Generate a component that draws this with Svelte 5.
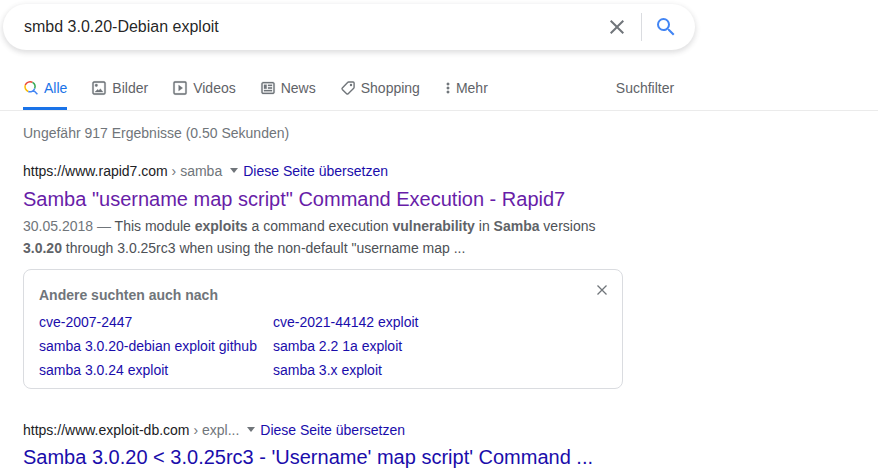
<script>
  const tabs = [
    { id: 'all', label: 'Alle', active: true },
    {
      id: 'images',
      label: 'Bilder',
      path: 'M14 13l4 5H6l4-4 1.79 1.78L14 13zm-6.01-2.99A2 2 0 0 0 8 6a2 2 0 0 0-.01 4.01zM22 5v14a3 3 0 0 1-3 2.99H5c-1.64 0-3-1.36-3-3V5c0-1.64 1.36-3 3-3h14c1.65 0 3 1.36 3 3zm-2.01 0a1 1 0 0 0-1-1H5a1 1 0 0 0-1 1v14a1 1 0 0 0 1 1h7v-.01h7a1 1 0 0 0 1-1V5'
    },
    {
      id: 'videos',
      label: 'Videos',
      path: 'M10 16.5l6-4.5-6-4.5v9zM5 20h14a1 1 0 0 0 1-1V5a1 1 0 0 0-1-1H5a1 1 0 0 0-1 1v14a1 1 0 0 0 1 1zm14.5 2H5a3 3 0 0 1-3-3V4.4A2.4 2.4 0 0 1 4.4 2h15.2A2.4 2.4 0 0 1 22 4.4v15.1a2.5 2.5 0 0 1-2.5 2.5'
    },
    {
      id: 'news',
      label: 'News',
      path: 'M12 11h6v2h-6v-2zm-6 6h12v-2H6v2zm0-4h4V7H6v6zm16-7.22v12.44c0 1.54-1.34 2.78-3 2.78H5c-1.64 0-3-1.25-3-2.78V5.78C2 4.26 3.36 3 5 3h14c1.64 0 3 1.25 3 2.78zM19.99 12V5.78c0-.42-.46-.78-1-.78H5c-.54 0-1 .36-1 .78v12.44c0 .42.46.78 1 .78h14c.54 0 1-.36 1-.78V12zM12 9h6V7h-6v2'
    },
    { id: 'shopping', label: 'Shopping' },
    {
      id: 'more',
      label: 'Mehr',
      path: 'M12 8c1.1 0 2-.9 2-2s-.9-2-2-2-2 .9-2 2 .9 2 2 2zm0 2c-1.100 0-2 .9-2 2s.9 2 2 2 2-.9 2-2-.9-2-2-2zm0 6c-1.100 0-2 .9-2 2s.9 2 2 2 2-.9 2-2-.9-2-2-2z'
    }
  ];
  const related = [
    'cve-2007-2447',
    'cve-2021-44142 exploit',
    'samba 3.0.20-debian exploit github',
    'samba 2.2 1a exploit',
    'samba 3.0.24 exploit',
    'samba 3.x exploit'
  ];
  const closePath =
    'M19 6.41L17.59 5 12 10.59 6.41 5 5 6.41 10.59 12 5 17.59 6.41 19 12 13.41 17.59 19 19 17.59 13.41 12z';
</script>

{#snippet source(domain, crumb)}
  <div class="source">
    <span class="domain">{domain}</span><span class="crumb">&nbsp;› {crumb}</span>
    <i class="caret"></i>
    <a href="#translate">Diese Seite übersetzen</a>
  </div>
{/snippet}

<div class="page">
  <header class="search">
    <span class="query">smbd 3.0.20-Debian exploit</span>
    <svg class="clear" width="24" height="24" viewBox="0 0 24 24"><path d={closePath} /></svg>
    <span class="divider"></span>
    <svg class="go" width="24" height="24" viewBox="0 0 24 24">
      <path d="M15.5 14h-.79l-.28-.27A6.471 6.471 0 0 0 16 9.5 6.5 6.5 0 1 0 9.5 16c1.61 0 3.09-.59 4.23-1.57l.27.28v.79l5 4.99L20.49 19l-4.99-5zm-6 0C7.01 14 5 11.99 5 9.5S7.01 5 9.5 5 14 7.01 14 9.5 11.99 14 9.5 14z" />
    </svg>
  </header>

  <nav class="tabs">
    {#each tabs as tab (tab.id)}
      <a class="tab {tab.id}" class:active={tab.active} href="#{tab.id}">
        {#if tab.id === 'all'}
          <svg class="lens" width="16" height="16" viewBox="0 0 16 16">
            <path d="M2.300 5.100A5 5 0 0 1 9.500 2.470" stroke="#ea4335" />
            <path d="M9.500 2.470A5 5 0 0 1 11.700 8.510" stroke="#34a853" />
            <path d="M5.290 11.500A5 5 0 0 1 2.300 5.100" stroke="#fbbc04" />
            <path d="M11.700 8.510A5 5 0 0 1 5.290 11.500M10.500 10.300L14.400 14.200" stroke="#4285f4" />
          </svg>
        {:else if tab.id === 'shopping'}
          <svg width="16" height="16" viewBox="0 0 16 16">
            <path d="M8.600 2H13.100Q14.100 2 14.100 3V7.300Q14.100 7.900 13.700 8.300L8.200 13.700Q7.400 14.400 6.600 13.700L2.300 9.400Q1.600 8.600 2.300 7.900L7.600 2.500Q8 2 8.600 2Z" fill="none" stroke="#70757a" stroke-width="1.4" />
            <circle cx="11" cy="5" r="1.200" />
          </svg>
        {:else}
          <svg class="glyph" width="16" height="16" viewBox="0 0 24 24"><path d={tab.path} /></svg>
        {/if}
        <span>{tab.label}</span>
      </a>
    {/each}
    <span class="filter">Suchfilter</span>
  </nav>

  <main>
    <div class="stats">Ungefähr 917 Ergebnisse (0.50 Sekunden)</div>

    <article>
      {@render source('https://www.rapid7.com', 'samba')}
      <h3 class="visited">Samba "username map script" Command Execution - Rapid7</h3>
      <p>
        <span class="date">30.05.2018 —</span> This module <b>exploits</b> a command execution
        <b>vulnerability</b> in <b>Samba</b> versions <b>3.0.20</b> through 3.0.25rc3 when using the
        non-default "username map ...
      </p>
    </article>

    <section class="related">
      <div class="heading">
        <h4>Andere suchten auch nach</h4>
        <svg width="16" height="16" viewBox="0 0 16 16">
          <path d="M3.500 3.500L12.500 12.500M12.500 3.500L3.500 12.500" fill="none" stroke="#70757a" stroke-width="1.300" />
        </svg>
      </div>
      <div class="links">
        {#each related as term}
          <a href="#related">{term}</a>
        {/each}
      </div>
    </section>

    <article>
      {@render source('https://www.exploit-db.com', 'expl...')}
      <h3>Samba 3.0.20 &lt; 3.0.25rc3 - 'Username' map script' Command ...</h3>
    </article>
  </main>
</div>

<style>
  :global(body) {
    background: #fff;
  }
  .page {
    box-sizing: border-box;
    height: 471px;
    padding-top: 4px;
    overflow: hidden;
    font-family: 'Liberation Sans', Arial, sans-serif;
    font-size: 14px;
    color: #4d5156;
  }
  a {
    color: #1a0dab;
    text-decoration: none;
  }
  svg {
    flex: none;
    fill: #70757a;
  }
  .search {
    box-sizing: border-box;
    display: flex;
    align-items: center;
    width: 692px;
    height: 46px;
    margin-left: 3px;
    padding: 0 17px 0 21px;
    border-radius: 24px;
    box-shadow: 0 2px 5px 1px rgba(64, 60, 67, 0.16);
  }
  .query {
    flex: 1;
    font-size: 16px;
    color: rgba(0, 0, 0, 0.87);
  }
  .divider {
    width: 1px;
    height: 28px;
    margin: 0 12px;
    background: #dadce0;
  }
  .go {
    fill: #4285f4;
  }
  .tabs {
    display: flex;
    gap: 24px;
    height: 60px;
    padding-left: 23px;
    border-bottom: 1px solid #ebebeb;
  }
  .tab {
    box-sizing: border-box;
    display: flex;
    align-items: center;
    gap: 5px;
    padding-top: 16px;
    border-bottom: 0 solid #1a73e8;
    color: #5f6368;
  }
  .active {
    padding-top: 19px;
    border-bottom-width: 3px;
    color: #1a73e8;
  }
  .lens {
    fill: none;
    stroke-width: 1.5;
  }
  .glyph {
    stroke: #70757a;
    stroke-width: 0.4;
  }
  .more {
    gap: 0;
    margin-left: -4px;
  }
  .filter {
    margin-left: 104px;
    padding-top: 30px;
    color: #5f6368;
  }
  main {
    width: 600px;
    margin-left: 23px;
  }
  .stats {
    padding-top: 14px;
    line-height: 16px;
    color: #70757a;
  }
  .source {
    display: flex;
    align-items: center;
    height: 18px;
  }
  .domain {
    color: #202124;
  }
  .crumb {
    color: #70757a;
  }
  .caret {
    margin: 0 5px 1px 8px;
    border: 4px solid transparent;
    border-top: 5px solid #70757a;
    border-bottom: 0;
  }
  article {
    padding-top: 21px;
  }
  h3 {
    margin: 5px 0 3px;
    font-size: 20px;
    font-weight: 400;
    line-height: 26px;
    color: #1a0dab;
    white-space: nowrap;
  }
  .visited {
    margin-top: 6px;
    color: #681da8;
  }
  p {
    margin: 0;
    line-height: 22px;
  }
  b {
    color: #5f6368;
  }
  .date {
    color: #70757a;
  }
  .related {
    box-sizing: border-box;
    height: 120px;
    margin: 10px 0 11px;
    padding: 12px 12px 0 15px;
    border: 1px solid #dadce0;
    border-radius: 8px;
  }
  .heading {
    display: flex;
    justify-content: space-between;
  }
  h4 {
    margin: 5px 0 0;
    font-size: 14px;
    line-height: 16px;
    color: #70757a;
  }
  .links {
    display: grid;
    grid-template-columns: max-content max-content;
    column-gap: 16px;
    margin-top: 7px;
    line-height: 24px;
  }
</style>
